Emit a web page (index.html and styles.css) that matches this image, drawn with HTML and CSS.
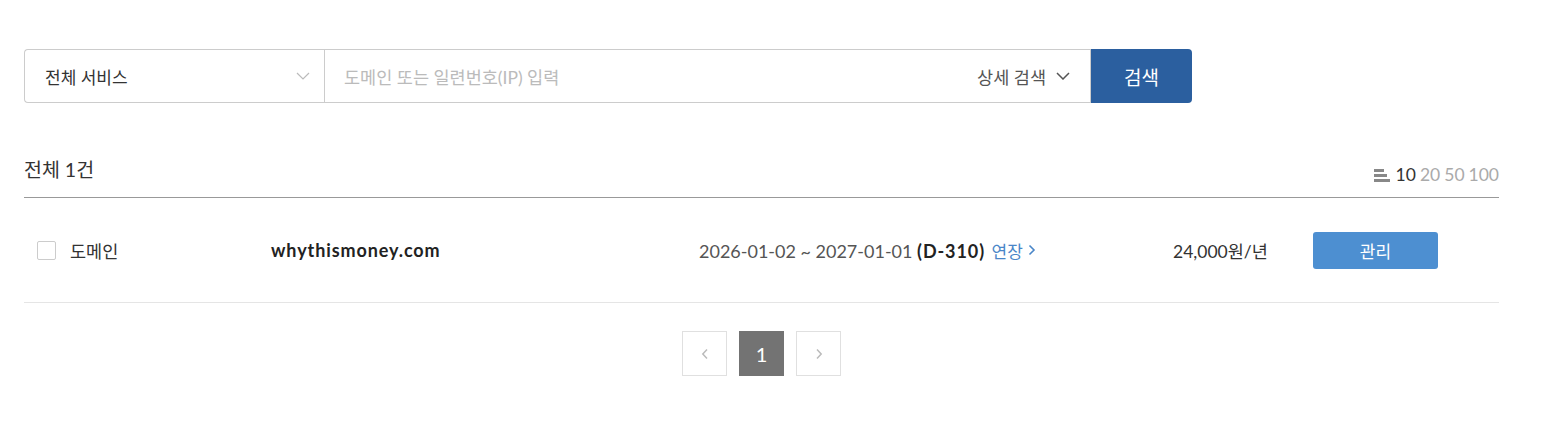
FILE: index.html
```html
<!DOCTYPE html>
<html lang="ko">
<head>
<meta charset="utf-8">
<link rel="stylesheet" href="styles.css">
</head>
<body>
<div class="page">
  <div class="search">
    <div class="select">
      <span>전체 서비스</span>
      <svg class="chev" width="14" height="8" viewBox="0 0 14 8"><path d="M1 1l6 6 6-6" fill="none" stroke="#bbb" stroke-width="1.2"/></svg>
    </div>
    <div class="input">
      <span class="ph">도메인 또는 일련번호(IP) 입력</span>
      <span class="detail">상세 검색
        <svg width="14" height="8" viewBox="0 0 14 8"><path d="M1 1l6 6 6-6" fill="none" stroke="#555" stroke-width="1.5"/></svg>
      </span>
    </div>
    <button class="btn-search">검색</button>
  </div>

  <div class="head">
    <div class="total">전체 1건</div>
    <div class="sizes">
      <svg width="16" height="14" viewBox="0 0 16 14"><rect x="0" y="1" width="10" height="3" fill="#888"/><rect x="0" y="6" width="13" height="3" fill="#888"/><rect x="0" y="11" width="16" height="3" fill="#888"/></svg>
      <span class="on">10</span><span>20</span><span>50</span><span>100</span>
    </div>
  </div>

  <div class="row">
    <span class="check"></span>
    <span class="type">도메인</span>
    <span class="domain">whythismoney.com</span>
    <span class="dates">2026-01-02 ~ 2027-01-01 <b>(D-310)</b> <a class="renew">연장<svg width="8" height="12" viewBox="0 0 8 12"><path d="M1.5 1.5l4.5 4.5-4.5 4.5" fill="none" stroke="#4a86c8" stroke-width="1.6"/></svg></a></span>
    <span class="price">24,000원/년</span>
    <button class="btn-manage">관리</button>
  </div>

  <div class="pager">
    <span class="pg"><svg width="8" height="12" viewBox="0 0 8 12"><path d="M6 1.5L1.8 6 6 10.5" fill="none" stroke="#bbb" stroke-width="1.5"/></svg></span>
    <span class="pg active">1</span>
    <span class="pg"><svg width="8" height="12" viewBox="0 0 8 12"><path d="M2 1.5L6.2 6 2 10.5" fill="none" stroke="#bbb" stroke-width="1.5"/></svg></span>
  </div>
</div>
</body>
</html>
```

FILE: styles.css
```css
* { box-sizing: border-box; }
html, body { margin: 0; background: #fff; }
body { font-family: Lato, "Noto Sans CJK KR", sans-serif; color: #333; }
.page { width: 1475px; margin-left: 24px; padding-top: 49px; }

.search { display: flex; height: 54px; width: 1168px; }
.select {
  width: 300px; border: 1px solid #ccc; border-right: none; border-radius: 4px 0 0 4px;
  display: flex; align-items: center; justify-content: space-between; padding: 0 14px 0 20px;
  font-size: 17px; color: #333;
}
.input {
  flex: 1; border: 1px solid #ccc;
  display: flex; align-items: center; justify-content: space-between; padding: 0 20px 0 19px;
  font-size: 17.5px;
}
.ph { color: #bbb; }
.detail { color: #555; display: flex; align-items: center; gap: 10px; }
.btn-search {
  width: 101px; border: none; background: #2b5f9f; color: #fff; font-family: inherit;
  font-size: 19px; border-radius: 0 4px 4px 0; padding: 0;
}

.head {
  margin-top: 47px; display: flex; justify-content: space-between; align-items: center;
  height: 48px; border-bottom: 1px solid #999; padding-bottom: 10px;
}
.total { font-size: 19.5px; color: #333; }
.sizes { display: flex; align-items: center; gap: 4px; font-size: 17.5px; color: #aaa; padding-top: 12px; }
.sizes svg { margin-right: 2px; }
.sizes .on { color: #333; }

.row {
  display: flex; align-items: center; height: 105px; border-bottom: 1px solid #e5e5e5;
  padding-left: 13px; font-size: 18px;
}
.check { width: 19px; height: 19px; border: 1px solid #ccc; border-radius: 2px; margin-right: 14px; }
.type { width: 201px; color: #333; font-size: 17.5px; }
.domain { width: 428px; font-weight: 700; color: #222; letter-spacing: 0.9px; }
.dates { width: 474px; color: #555; }
.dates b { color: #222; letter-spacing: 0.9px; }
.renew { color: #4a86c8; font-size: 17px; display: inline-flex; align-items: center; gap: 5px; margin-left: 2px; }
.price { width: 140px; color: #333; font-size: 17.5px; }
.btn-manage {
  width: 125px; height: 37px; border: none; border-radius: 3px; background: #4d8fd1; color: #fff;
  font-family: inherit; font-size: 17px; padding: 0;
}

.pager { display: flex; justify-content: center; gap: 12px; margin-top: 28px; }
.pg {
  width: 45px; height: 45px; border: 1px solid #e0e0e0; display: flex; align-items: center;
  justify-content: center; font-size: 20px; color: #fff;
}
.pg.active { background: #737373; border-color: #737373; }
```
